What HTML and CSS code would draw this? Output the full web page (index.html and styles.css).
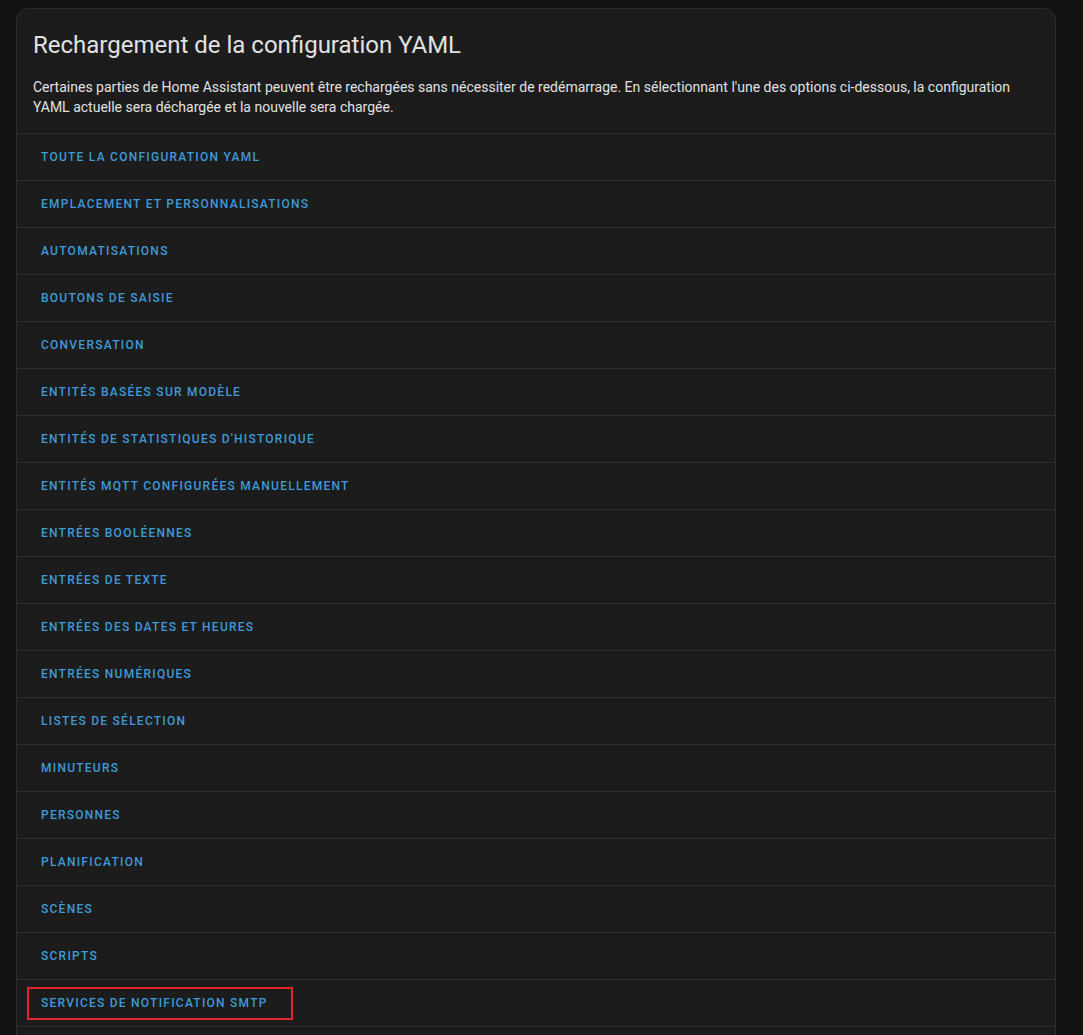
FILE: index.html
```html
<!DOCTYPE html>
<html lang="fr">
<head>
  <meta charset="UTF-8">
  <meta name="viewport" content="width=device-width, initial-scale=1.0">
  <title>Rechargement de la configuration YAML</title>
  <link rel="stylesheet" href="styles.css">
</head>
<body>
  <div class="card">
    <div class="card-header">
      <h1>Rechargement de la configuration YAML</h1>
      <p>Certaines parties de Home Assistant peuvent être rechargées sans nécessiter de redémarrage. En sélectionnant l'une des options ci-dessous, la configuration YAML actuelle sera déchargée et la nouvelle sera chargée.</p>
    </div>
    <div class="reload-list">
      <div class="reload-row"><button>Toute la configuration YAML</button></div>
      <div class="reload-row"><button>Emplacement et personnalisations</button></div>
      <div class="reload-row"><button>Automatisations</button></div>
      <div class="reload-row"><button>Boutons de saisie</button></div>
      <div class="reload-row"><button>Conversation</button></div>
      <div class="reload-row"><button>Entités basées sur modèle</button></div>
      <div class="reload-row"><button>Entités de statistiques d'historique</button></div>
      <div class="reload-row"><button>Entités MQTT configurées manuellement</button></div>
      <div class="reload-row"><button>Entrées booléennes</button></div>
      <div class="reload-row"><button>Entrées de texte</button></div>
      <div class="reload-row"><button>Entrées des dates et heures</button></div>
      <div class="reload-row"><button>Entrées numériques</button></div>
      <div class="reload-row"><button>Listes de sélection</button></div>
      <div class="reload-row"><button>Minuteurs</button></div>
      <div class="reload-row"><button>Personnes</button></div>
      <div class="reload-row"><button>Planification</button></div>
      <div class="reload-row"><button>Scènes</button></div>
      <div class="reload-row"><button>Scripts</button></div>
      <div class="reload-row highlighted"><button>Services de notification SMTP</button></div>
      <div class="reload-row empty"></div>
    </div>
  </div>
</body>
</html>
```

FILE: styles.css
```css
body {
  margin: 0;
  padding: 8px 27px 0 16px;
  background-color: #111111;
  font-family: Roboto, 'Noto Sans', sans-serif;
  color: #e1e1e1;
  height: 1035px;
  overflow: hidden;
  box-sizing: border-box;
}
.card {
  background-color: #1c1c1c;
  border: 1px solid #2d2d2d;
  border-radius: 12px;
  overflow: hidden;
}
.card-header {
  padding: 20px 16px 16px 16px;
}
.card-header h1 {
  margin: 0 0 16px 0;
  font-size: 24px;
  font-weight: 400;
  line-height: 32px;
  color: #e1e1e1;
}
.card-header p {
  margin: 0;
  font-size: 14px;
  line-height: 20px;
  color: #e1e1e1;
}
.reload-row {
  border-top: 1px solid #2f2f2f;
  height: 46px;
  display: flex;
  align-items: center;
  padding-left: 16px;
  position: relative;
}
.reload-row button {
  background: none;
  border: none;
  padding: 0 8px;
  height: 36px;
  font-family: Roboto, 'Noto Sans', sans-serif;
  font-size: 12px;
  font-weight: 500;
  letter-spacing: 1.25px;
  text-transform: uppercase;
  color: #3e9ad8;
  cursor: pointer;
}
.reload-row.highlighted::after {
  content: '';
  position: absolute;
  left: 10px;
  top: 7px;
  width: 262px;
  height: 29px;
  border: 2px solid #e2252b;
}
```
